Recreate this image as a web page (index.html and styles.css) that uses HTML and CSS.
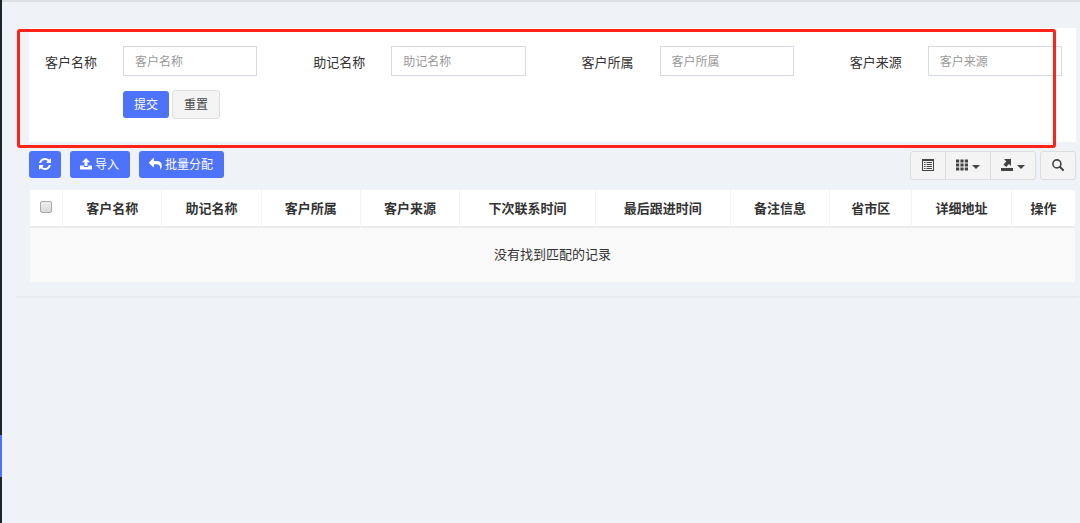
FILE: index.html
```html
<!DOCTYPE html>
<html lang="zh-CN">
<head>
<meta charset="utf-8">
<title>客户管理</title>
<link rel="stylesheet" href="styles.css">
</head>
<body>
<div class="app">
  <aside class="sidebar"><div class="sidebar-active"></div></aside>
  <main class="content">
    <section class="panel">
      <form class="search">
        <div class="fields">
          <div class="field"><label for="name">客户名称</label><input id="name" type="text" placeholder="客户名称"></div>
          <div class="field"><label for="mnemonic">助记名称</label><input id="mnemonic" type="text" placeholder="助记名称"></div>
          <div class="field"><label for="owner">客户所属</label><input id="owner" type="text" placeholder="客户所属"></div>
          <div class="field"><label for="source">客户来源</label><input id="source" type="text" placeholder="客户来源"></div>
        </div>
        <div class="actions">
          <button class="btn btn-primary" type="submit">提交</button>
          <button class="btn btn-default" type="reset">重置</button>
        </div>
        <div class="highlight"></div>
      </form>

      <div class="toolbar">
        <div class="tools-left">
          <button class="btn btn-primary" type="button" aria-label="刷新">
            <svg class="icon" width="12" height="12" viewBox="0 0 1536 1536"><path d="M1511 928q0 5-1 7-64 268-268 434.500T764 1536q-146 0-282.500-55T238 1324l-129 129q-19 19-45 19t-45-19-19-45V960q0-26 19-45t45-19h448q26 0 45 19t19 45-19 45l-137 137q71 66 161 102t187 36q134 0 250-65t186-179q11-17 53-117 8-23 30-23h192q13 0 22.500 9.500t9.500 22.500zm25-800v448q0 26-19 45t-45 19h-448q-26 0-45-19t-19-45 19-45l138-138Q969 256 768 256q-134 0-250 65T332 500q-11 17-53 117-8 23-30 23H50q-13 0-22.500-9.500T18 608v-7q65-268 270-434.500T768 0q146 0 284 55.500T1297 212l130-129q19-19 45-19t45 19 19 45z"/></svg>
          </button>
          <button class="btn btn-primary" type="button">
            <svg class="icon" width="12" height="12" viewBox="0 0 12 12"><path d="M6 0 10 4.200H7.500V8H4.500V4.200H2zM.6 7.500H3.700V8.500Q3.800 9 4.300 9H7.700Q8.200 9 8.300 8.500V7.500H11.400Q12 7.500 12 8.100V11Q12 11.600 11.400 11.600H.6Q0 11.600 0 11V8.100Q0 7.500.6 7.500z"/></svg>导入
          </button>
          <button class="btn btn-primary" type="button">
            <svg class="icon" width="13" height="12" viewBox="0 0 13 12"><path d="M5 .5V3H7.500Q12.800 3 12.800 7.500 12.800 9.300 11.700 11.400 11.300 11.900 11.200 11.100 11.400 8.400 10.400 7.300 9.500 6.300 7.500 6.300H5V8.800Q4.800 9.600 4.100 9.100L.2 5.200Q-.1 4.800.2 4.300L4.100.2Q4.800-.2 5 .5z"/></svg>批量分配
          </button>
        </div>
        <div class="tools-right">
          <div class="group">
            <button class="btn btn-default" type="button" aria-label="切换">
              <svg class="icon" width="12" height="12" viewBox="0 0 12 12"><path fill-rule="evenodd" d="M0 0H12V12H0zM1 2V11H11V2zM2 3H3.500V4H2zM4.500 3H10V4H4.500zM2 5H3.500V6H2zM4.500 5H10V6H4.500zM2 7H3.500V8H2zM4.500 7H10V8H4.500zM2 9H3.500V10H2zM4.500 9H10V10H4.500z"/></svg>
            </button>
            <button class="btn btn-default" type="button" aria-label="列">
              <svg class="icon" width="12" height="12" viewBox="0 0 12 12"><path d="M0 .5h3.200v3H0zM4.400 .5h3.200v3H4.400zM8.800 .5H12v3H8.800zM0 4.500h3.200v3H0zM4.400 4.500h3.200v3H4.400zM8.800 4.500H12v3H8.800zM0 8.500h3.200v3H0zM4.400 8.500h3.200v3H4.400zM8.800 8.500H12v3H8.800z"/></svg><span class="caret"></span>
            </button>
            <button class="btn btn-default" type="button" aria-label="导出">
              <svg class="icon" width="12" height="12" viewBox="0 0 12 12"><path d="M0 9H12V12H0zM3 0H10V7L8 5 5.200 8 2.400 5.600 5.400 2.400z"/></svg><span class="caret"></span>
            </button>
          </div>
          <button class="btn btn-default" type="button" aria-label="搜索">
            <svg class="icon" width="12" height="12" viewBox="0 0 12 12"><circle cx="4.900" cy="4.900" r="4" fill="none" stroke="currentColor" stroke-width="1.600"/><path d="M7.800 7.800 11 11" stroke="currentColor" stroke-width="2" stroke-linecap="round"/></svg>
          </button>
        </div>
      </div>

      <table class="grid">
        <colgroup>
          <col class="c-check"><col class="c-four"><col class="c-four"><col class="c-four"><col class="c-four"><col class="c-six"><col class="c-six"><col class="c-four"><col class="c-three"><col class="c-four"><col class="c-two">
        </colgroup>
        <thead>
          <tr>
            <th><input class="check" type="checkbox" aria-label="全选"></th>
            <th>客户名称</th><th>助记名称</th><th>客户所属</th><th>客户来源</th><th>下次联系时间</th><th>最后跟进时间</th><th>备注信息</th><th>省市区</th><th>详细地址</th><th>操作</th>
          </tr>
        </thead>
        <tbody><tr><td colspan="11">没有找到匹配的记录</td></tr></tbody>
      </table>
    </section>
  </main>
</div>
</body>
</html>
```
FILE: styles.css
```css
* { box-sizing: border-box; }

body {
  margin: 0;
  background: #eff3f7;
  color: #333;
  font: 13px/18px "Noto Sans CJK SC", sans-serif;
}

input, button { font: inherit; }

.app {
  display: flex;
  min-height: 100vh;
}

.sidebar {
  flex: 0 0 2px;
  display: flex;
  flex-direction: column;
  justify-content: flex-end;
  padding-bottom: 46px;
  background: #1c252b;
}

.sidebar-active {
  height: 42px;
  background: #4e73fa;
}

.content {
  flex: 1;
  min-width: 0;
  padding: 13px 0 0 13px;
  border-top: 2px solid #dcdfe1;
}

.panel {
  padding: 13px 4px 14px 14px;
  border-bottom: 2px solid #e7ebee;
  border-radius: 3px;
}

.search {
  position: relative;
  padding: 18px 14px 23px 16px;
  background: #fff;
}

.fields {
  display: grid;
  grid-template-columns: repeat(4, minmax(0, 1fr));
  column-gap: 56px;
}

.field {
  display: flex;
  align-items: center;
}

.field label {
  flex: 0 0 78px;
  padding-top: 2px;
}

.field input {
  flex: 1;
  min-width: 0;
  height: 30px;
  padding: 0 11px 2px;
  border: 1px solid #d6dae2;
  border-radius: 0;
  background: #fff;
  font-size: 12px;
}

.field input::placeholder { color: #999; }

.actions {
  display: flex;
  align-items: center;
  gap: 3px;
  margin: 14px 0 0 78px;
}

.btn {
  display: inline-flex;
  align-items: center;
  justify-content: center;
  gap: 3px;
  height: 27px;
  padding: 0 11px 2px;
  border: 0;
  border-radius: 3px;
  font-size: 12px;
  line-height: 18px;
}

.btn-primary {
  background: #4e73fb;
  color: #fff;
}

.btn-default {
  height: 29px;
  border: 1px solid #ddd;
  background: #f4f4f4;
  color: #444;
}

.actions .btn-default { padding: 0 11px 2px; }

.icon { fill: currentColor; }

.highlight {
  position: absolute;
  inset: 1px 20px -6px -12px;
  border: 3px solid #fe2419;
  border-radius: 3px;
  pointer-events: none;
}

.toolbar {
  display: flex;
  justify-content: space-between;
  align-items: flex-start;
  margin-top: 9px;
}

.tools-left {
  display: flex;
  gap: 9px;
}

.tools-left .btn { padding: 0 10px 2px; }
.tools-left .btn + .btn { padding: 0 11px 2px 10px; }

.tools-right {
  display: flex;
  gap: 4px;
}

.group { display: flex; }
.group .btn { border-radius: 0; margin-left: -1px; padding: 0 10px 2px; gap: 4px; }
.group .btn:first-child { border-radius: 3px 0 0 3px; padding: 0 11px 2px; }
.group .btn:last-child { border-radius: 0 3px 3px 0; }

.caret {
  margin-top: 4px;
  border-top: 4px solid currentColor;
  border-left: 4px solid transparent;
  border-right: 4px solid transparent;
}

.grid {
  width: calc(100% - 2px);
  margin: 10px 0 0 1px;
  border-spacing: 0;
  table-layout: fixed;
  background: #fff;
}

.c-check { width: 33px; }
.c-two { width: 63px; }
.c-three { width: 82px; }
.c-four { width: 99px; }
.c-six { width: 135px; }

.grid th {
  height: 38px;
  padding: 0;
  border-right: 1px solid #f4f4f4;
  border-bottom: 2px solid #ebebeb;
  text-align: center;
  vertical-align: middle;
}

.grid th:last-child { border-right: 0; }

.grid td {
  height: 54px;
  padding: 0 0 2px;
  background: #f9f9f9;
  text-align: center;
}

.check {
  appearance: none;
  display: block;
  width: 12px;
  height: 12px;
  margin: 0 auto 3px;
  border: 1px solid #aaa;
  border-radius: 2px;
  background: linear-gradient(#eee, #d9d9d9);
}
```
